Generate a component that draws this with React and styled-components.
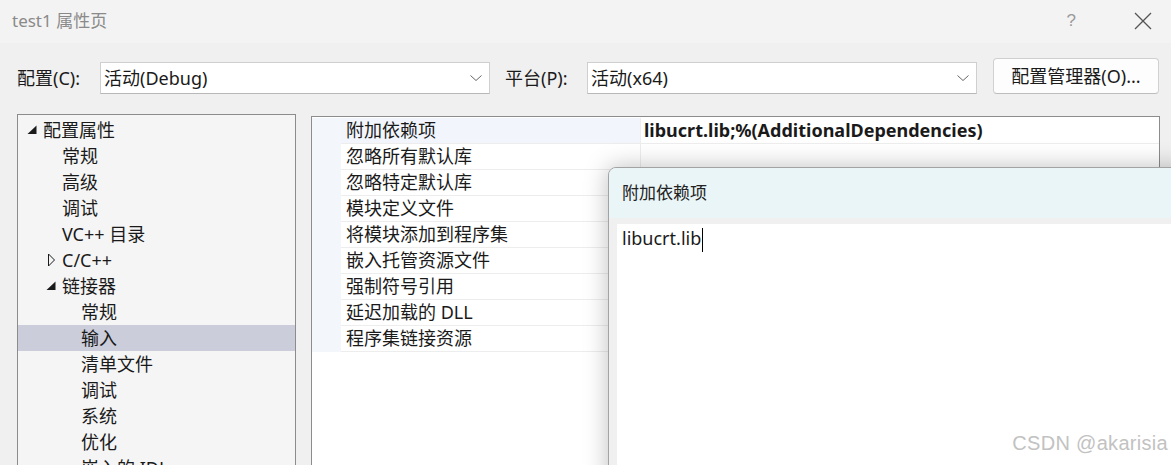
import React from "react";
import styled, { createGlobalStyle } from "styled-components";

const GlobalStyle = createGlobalStyle`
  html, body {
    margin: 0;
    padding: 0;
    background: #f0f0f0;
  }
  body {
    font-family: "Noto Sans", "Noto Sans CJK SC", sans-serif;
  }
`;

const treeItems = [
  { label: "配置属性", level: 0, arrow: "open" },
  { label: "常规", level: 1 },
  { label: "高级", level: 1 },
  { label: "调试", level: 1 },
  { label: "VC++ 目录", level: 1 },
  { label: "C/C++", level: 1, arrow: "closed" },
  { label: "链接器", level: 1, arrow: "open" },
  { label: "常规", level: 2 },
  { label: "输入", level: 2, selected: true },
  { label: "清单文件", level: 2 },
  { label: "调试", level: 2 },
  { label: "系统", level: 2 },
  { label: "优化", level: 2 },
  { label: "嵌入的 IDL", level: 2 },
  { label: "Windows 元数据", level: 2 },
];

const props = [
  { name: "附加依赖项", value: "libucrt.lib;%(AdditionalDependencies)", active: true },
  { name: "忽略所有默认库" },
  { name: "忽略特定默认库" },
  { name: "模块定义文件" },
  { name: "将模块添加到程序集" },
  { name: "嵌入托管资源文件" },
  { name: "强制符号引用" },
  { name: "延迟加载的 DLL" },
  { name: "程序集链接资源" },
];

const Arrow = ({ type }) => {
  if (type === "open") {
    return (
      <svg width="16" height="26" viewBox="0 0 16 26">
        <polygon points="9.5,8.5 9.5,17 0.5,17" fill="#1a1a1a" />
      </svg>
    );
  }
  if (type === "closed") {
    return (
      <svg width="16" height="26" viewBox="0 0 16 26">
        <polygon points="2.5,7 8.5,13 2.5,19" fill="none" stroke="#1a1a1a" strokeWidth="1" />
      </svg>
    );
  }
  return null;
};

const Chevron = () => (
  <svg width="14" height="8" viewBox="0 0 14 8">
    <polyline points="1.5,1.5 7,6.5 12.5,1.5" fill="none" stroke="#666" strokeWidth="1" />
  </svg>
);

const App = () => {
  return (
    <Window>
      <GlobalStyle />
      <TitleBar>
        <Title>test1 属性页</Title>
        <TitleButtons>
          <Help>?</Help>
          <svg width="18" height="18" viewBox="0 0 18 18">
            <line x1="1" y1="1" x2="17" y2="17" stroke="#555" strokeWidth="1.2" />
            <line x1="17" y1="1" x2="1" y2="17" stroke="#555" strokeWidth="1.2" />
          </svg>
        </TitleButtons>
      </TitleBar>

      <ConfigRow>
        <Label $width={83}>配置(C):</Label>
        <Combo>
          <span>活动(Debug)</span>
          <Chevron />
        </Combo>
        <Label $width={82} $gap={15}>平台(P):</Label>
        <Combo>
          <span>活动(x64)</span>
          <Chevron />
        </Combo>
        <ManagerButton>配置管理器(O)...</ManagerButton>
      </ConfigRow>

      <Main>
        <TreePanel>
          {treeItems.map((item, i) => (
            <TreeRow key={i} $level={item.level} $selected={item.selected}>
              <ArrowSlot>
                <Arrow type={item.arrow} />
              </ArrowSlot>
              <span>{item.label}</span>
            </TreeRow>
          ))}
        </TreePanel>

        <PropGrid>
          {props.map((p, i) => (
            <PropRow key={i}>
              <Gutter />
              <NameCell $active={p.active}>{p.name}</NameCell>
              <ValueCell>{p.value}</ValueCell>
            </PropRow>
          ))}
        </PropGrid>
      </Main>

      <Popup>
        <PopupHeader>附加依赖项</PopupHeader>
        <PopupBody>
          <EditBox>
            <span>libucrt.lib</span>
            <Caret />
          </EditBox>
        </PopupBody>
      </Popup>

      <Watermark>CSDN @akarisia</Watermark>
    </Window>
  );
};

const Window = styled.div`
  position: relative;
  width: 1171px;
  height: 465px;
  overflow: hidden;
  background: #f0f0f0;
  display: flex;
  flex-direction: column;
  color: #1a1a1a;
  font-size: 18px;
`;

const TitleBar = styled.div`
  height: 43px;
  flex-shrink: 0;
  background: #f3f3f3;
  display: flex;
  align-items: center;
  justify-content: space-between;
  padding: 0 19px 2px 12px;
  box-sizing: border-box;
`;

const Title = styled.div`
  color: #8a8a8a;
  font-size: 17px;
  line-height: 24px;
`;

const TitleButtons = styled.div`
  display: flex;
  align-items: center;
  gap: 58px;
`;

const Help = styled.span`
  color: #9a9a9a;
  font-size: 17px;
  font-family: "Liberation Sans", sans-serif;
  font-weight: 300;
`;

const ConfigRow = styled.div`
  height: 71px;
  flex-shrink: 0;
  display: flex;
  align-items: center;
  padding: 0 0 2px 17px;
  box-sizing: border-box;
`;

const Label = styled.div`
  width: ${(p) => p.$width}px;
  margin-left: ${(p) => p.$gap || 0}px;
  flex-shrink: 0;
  line-height: 24px;
`;

const Combo = styled.div`
  width: 390px;
  height: 32px;
  box-sizing: border-box;
  background: #fff;
  border: 1px solid #cfcfcf;
  border-bottom-color: #b8b8b8;
  display: flex;
  align-items: center;
  justify-content: space-between;
  padding: 0 6px 0 3px;
  line-height: 24px;
`;

const ManagerButton = styled.div`
  margin-left: 16px;
  width: 166px;
  height: 36px;
  margin-top: -4px;
  box-sizing: border-box;
  background: #fdfdfd;
  border: 1px solid #d0d0d0;
  border-bottom-color: #bdbdbd;
  border-radius: 4px;
  display: flex;
  align-items: center;
  justify-content: center;
  line-height: 24px;
`;

const Main = styled.div`
  flex: 1;
  display: flex;
  gap: 15px;
  padding-left: 17px;
  min-height: 0;
`;

const TreePanel = styled.div`
  width: 279px;
  flex-shrink: 0;
  box-sizing: border-box;
  background: #f5f5f5;
  border: 1px solid #8c8c8c;
  border-bottom: none;
  padding-top: 2px;
`;

const TreeRow = styled.div`
  height: 26px;
  display: flex;
  align-items: center;
  padding-left: ${(p) => 9 + p.$level * 19}px;
  background: ${(p) => (p.$selected ? "#cccdda" : "transparent")};
  line-height: 26px;
  white-space: nowrap;
`;

const ArrowSlot = styled.div`
  width: 16px;
  height: 26px;
  flex-shrink: 0;
`;

const PropGrid = styled.div`
  width: 849px;
  flex-shrink: 0;
  margin-top: 2px;
  box-sizing: border-box;
  background: #fff;
  border: 1px solid #8c8c8c;
  border-bottom: none;
  padding-top: 1px;
`;

const PropRow = styled.div`
  display: flex;
  height: 26px;
`;

const Gutter = styled.div`
  width: 29px;
  flex-shrink: 0;
  background: #f3f6fb;
`;

const NameCell = styled.div`
  width: 299px;
  flex-shrink: 0;
  box-sizing: border-box;
  padding-left: 5px;
  line-height: 25px;
  background: ${(p) => (p.$active ? "#f2f6fc" : "#fff")};
  border-bottom: 1px solid #ededed;
  white-space: nowrap;
`;

const ValueCell = styled.div`
  flex: 1;
  box-sizing: border-box;
  padding-left: 3px;
  line-height: 25px;
  font-weight: 700;
  font-size: 18px;
  border-left: 1px solid #ededed;
  border-bottom: 1px solid #ededed;
  white-space: nowrap;
`;

const Popup = styled.div`
  position: absolute;
  left: 608px;
  top: 167px;
  right: -20px;
  bottom: -20px;
  display: flex;
  flex-direction: column;
  background: #f0f0f0;
  border: 1px solid #a3a3a3;
  border-top-left-radius: 8px;
  overflow: hidden;
  box-shadow: 0 0 24px rgba(0, 0, 0, 0.26);
`;

const PopupHeader = styled.div`
  height: 50px;
  flex-shrink: 0;
  background: #eaf5f7;
  display: flex;
  align-items: center;
  padding-left: 13px;
  font-size: 17px;
  line-height: 24px;
  color: #222;
`;

const PopupBody = styled.div`
  flex: 1;
  display: flex;
  padding: 6px 0 0 8px;
`;

const EditBox = styled.div`
  flex: 1;
  background: #fff;
  padding: 2px 0 0 5px;
  display: flex;
  align-items: flex-start;
  line-height: 24px;
  font-size: 18px;
`;

const Caret = styled.span`
  width: 1px;
  height: 24px;
  background: #000;
  margin-left: 1px;
  margin-top: 2px;
`;

const Watermark = styled.div`
  position: absolute;
  right: 3px;
  bottom: 11px;
  font-family: "Liberation Sans", Arial, sans-serif;
  font-size: 20px;
  letter-spacing: 0.3px;
  color: #c2c2c2;
  line-height: 22px;
`;

export default App;
